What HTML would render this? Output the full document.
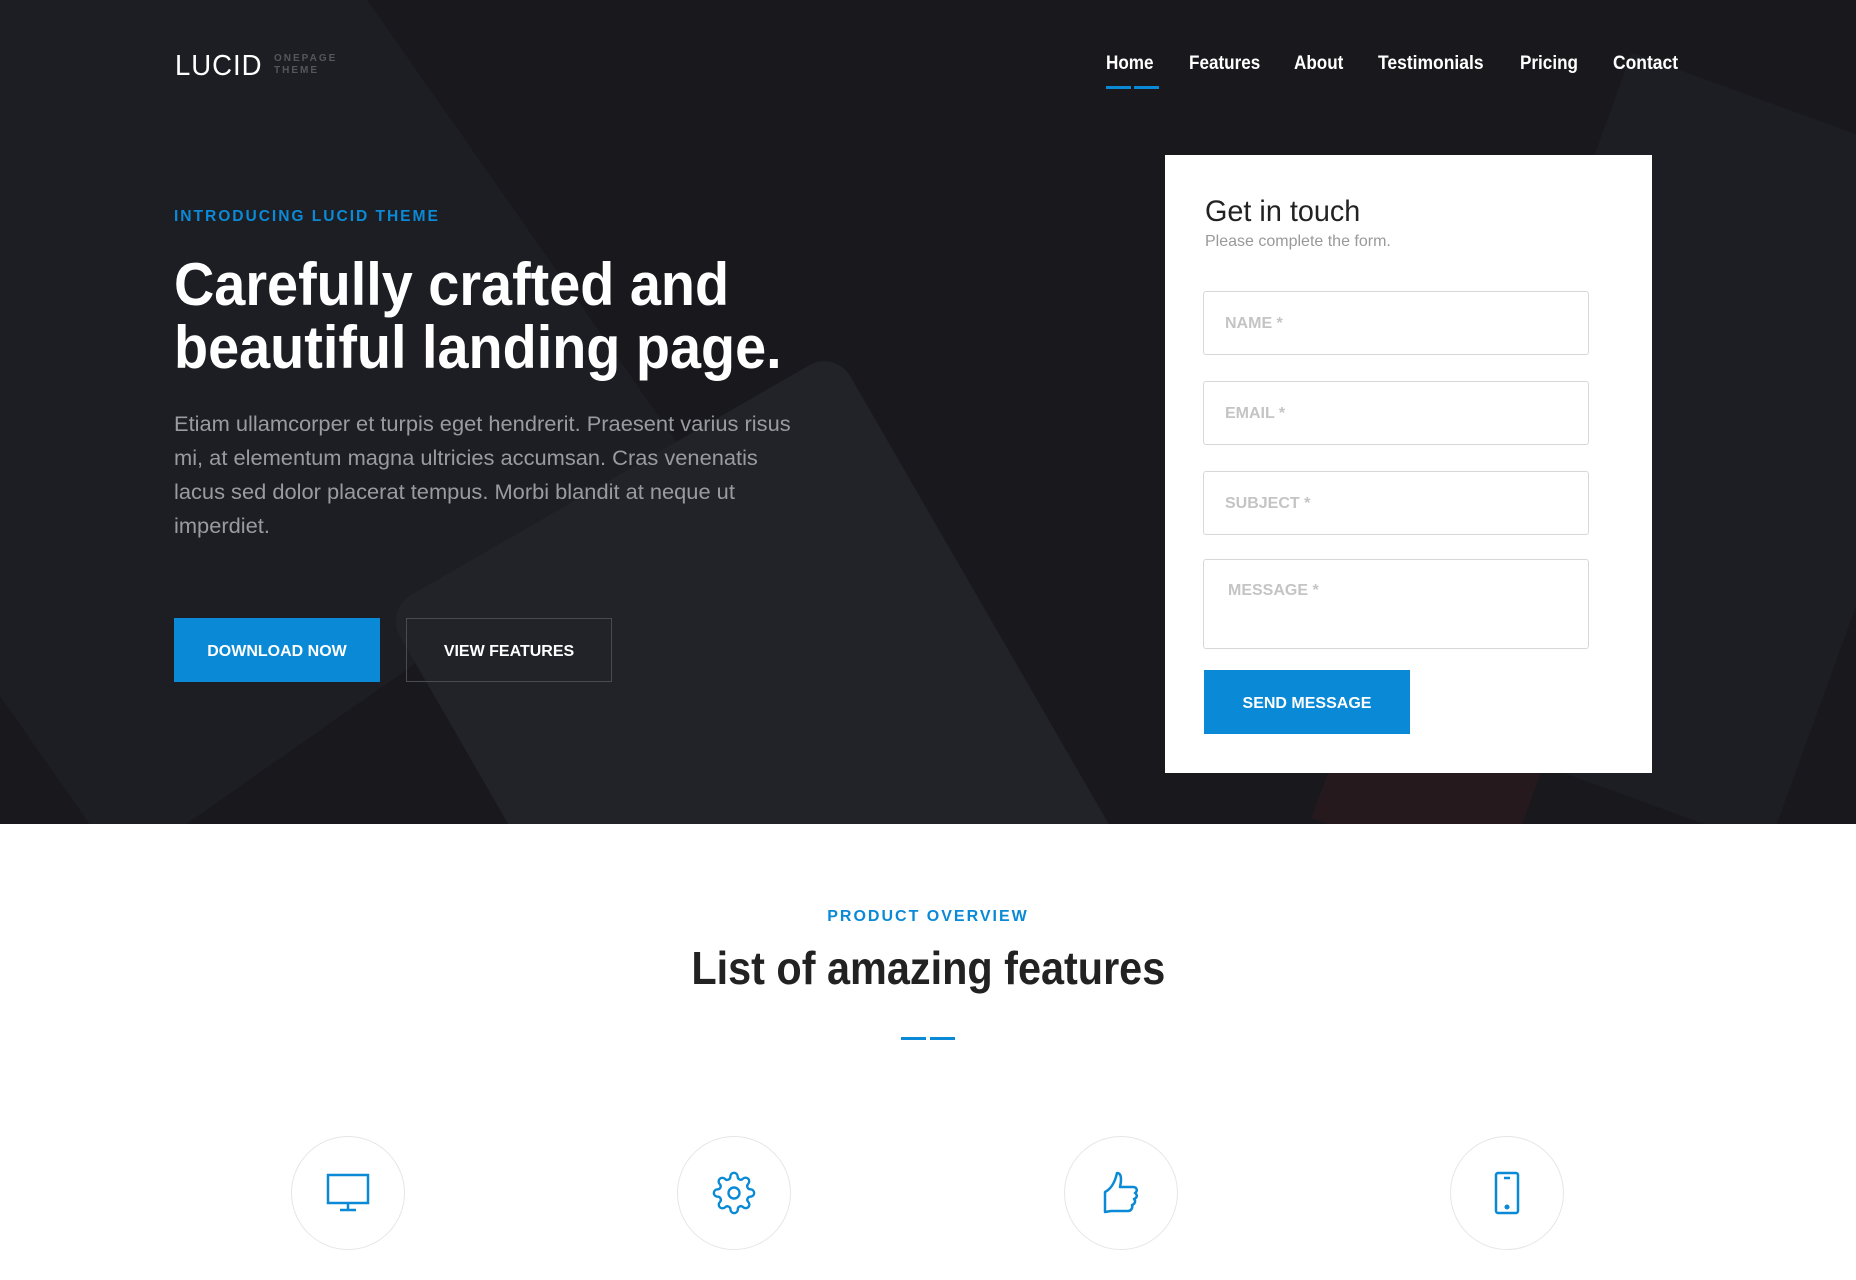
<!DOCTYPE html>
<html><head><meta charset="utf-8"><style>
*{margin:0;padding:0;box-sizing:border-box}
body{width:1856px;height:1280px;overflow:hidden;font-family:"Liberation Sans",sans-serif;background:#fff;position:relative}
.hero{position:absolute;left:0;top:0;width:1856px;height:824px;background:#18181d;overflow:hidden}
.shape{position:absolute}
.a{position:absolute;white-space:nowrap}
.sq{display:inline-block;transform-origin:left center}
nav .a{color:#fff;font-size:19px;font-weight:bold;top:53px}
.inp{position:absolute;left:38px;width:386px;border:1px solid #d8d8d8;border-radius:3px;color:#c4c4c4;font-weight:bold;font-size:16px;padding-left:21px}
.circ{position:absolute;top:1136px;width:114px;height:114px;border:1px solid #e6e6e6;border-radius:50%;display:flex;align-items:center;justify-content:center}
</style></head><body>
<div class="hero">
 <div class="shape" style="left:-200px;top:-150px;width:700px;height:900px;background:#202127;transform:rotate(-35deg);opacity:.7"></div>
 <div class="shape" style="left:500px;top:440px;width:520px;height:600px;background:#222329;transform:rotate(-30deg);border-radius:30px"></div>
 <div class="shape" style="left:1500px;top:100px;width:400px;height:700px;background:#1d1e23;transform:rotate(20deg)"></div>
 <div class="shape" style="left:1350px;top:600px;width:200px;height:260px;background:#25191e;transform:rotate(20deg)"></div>
</div>
<div class="a" style="left:175px;top:50px;color:#fff;font-size:29px;letter-spacing:1px"><span class="sq" style="transform:scaleX(.95)">LUCID</span></div>
<div class="a" style="left:274px;top:53px;color:#55565c;font-size:10px;letter-spacing:2px;line-height:12px;font-weight:bold">ONEPAGE<br>THEME</div>
<nav>
 <div class="a" style="left:1106px"><span class="sq" style="transform:scaleX(.9)">Home</span></div>
 <div class="a" style="left:1189px"><span class="sq" style="transform:scaleX(.9)">Features</span></div>
 <div class="a" style="left:1294px"><span class="sq" style="transform:scaleX(.9)">About</span></div>
 <div class="a" style="left:1378px"><span class="sq" style="transform:scaleX(.92)">Testimonials</span></div>
 <div class="a" style="left:1520px"><span class="sq" style="transform:scaleX(.9)">Pricing</span></div>
 <div class="a" style="left:1613px"><span class="sq" style="transform:scaleX(.92)">Contact</span></div>
</nav>
<div class="a" style="left:1106px;top:86px;width:25px;height:3px;background:#0a8ad6"></div>
<div class="a" style="left:1134px;top:86px;width:25px;height:3px;background:#0a8ad6"></div>

<div class="a" style="left:174px;top:208px;color:#0a8ad6;font-size:16px;font-weight:bold;letter-spacing:2px"><span class="sq" style="transform:scaleX(.975)">INTRODUCING LUCID THEME</span></div>
<div class="a" style="left:174px;top:253px;color:#fff;font-size:60px;font-weight:bold;line-height:63px"><span class="sq" style="transform:scaleX(.93)">Carefully crafted and<br>beautiful landing page.</span></div>
<div class="a" style="left:174px;top:408px;color:#9a9ba1;font-size:21px;line-height:34px"><span class="sq" style="transform:scaleX(1.04)">Etiam ullamcorper et turpis eget hendrerit. Praesent varius risus<br>mi, at elementum magna ultricies accumsan. Cras venenatis<br>lacus sed dolor placerat tempus. Morbi blandit at neque ut<br>imperdiet.</span></div>
<div class="a" style="left:174px;top:618px;width:206px;height:64px;background:#0a8ad6;color:#fff;font-weight:bold;font-size:16px;display:flex;align-items:center;justify-content:center;padding-top:3px">DOWNLOAD NOW</div>
<div class="a" style="left:406px;top:618px;width:206px;height:64px;border:1px solid #4a4b50;color:#fff;font-weight:bold;font-size:16px;display:flex;align-items:center;justify-content:center;padding-top:3px">VIEW FEATURES</div>

<div class="a" style="left:1165px;top:155px;width:487px;height:618px;background:#fff">
 <div class="a" style="left:40px;top:40px;color:#222;font-size:30px"><span class="sq" style="transform:scaleX(.96)">Get in touch</span></div>
 <div class="a" style="left:40px;top:78px;color:#999;font-size:16px">Please complete the form.</div>
 <div class="inp" style="top:136px;height:64px;line-height:64px">NAME *</div>
 <div class="inp" style="top:226px;height:64px;line-height:64px">EMAIL *</div>
 <div class="inp" style="top:316px;height:64px;line-height:64px">SUBJECT *</div>
 <div class="inp" style="top:404px;height:90px;padding-top:22px;padding-left:24px">MESSAGE *</div>
 <div class="a" style="left:39px;top:515px;width:206px;height:64px;background:#0a8ad6;color:#fff;font-weight:bold;font-size:16px;display:flex;align-items:center;justify-content:center;padding-top:3px">SEND MESSAGE</div>
</div>

<div class="a" style="left:0;width:1856px;top:908px;text-align:center;color:#0a8ad6;font-size:16px;font-weight:bold;letter-spacing:2px">PRODUCT OVERVIEW</div>
<div class="a" style="left:0;width:1856px;top:941px;text-align:center;color:#222;font-size:46px;font-weight:bold"><span class="sq" style="transform:scaleX(.9);transform-origin:center">List of amazing features</span></div>
<div class="a" style="left:901px;top:1037px;width:25px;height:3px;background:#0a8ad6"></div>
<div class="a" style="left:930px;top:1037px;width:25px;height:3px;background:#0a8ad6"></div>

<div class="circ" style="left:291px"><svg width="44" height="40" viewBox="0 0 44 40" fill="none" stroke="#0a8ad6" stroke-width="2.5"><rect x="2" y="2" width="40" height="28"/><path d="M22 30v6M14 37h16"/></svg></div>
<div class="circ" style="left:677px"><svg width="44" height="44" viewBox="0 0 24 24" fill="none" stroke="#0a8ad6" stroke-width="1.3"><circle cx="12" cy="12" r="3"/><path d="M19.4 15a1.65 1.65 0 0 0 .33 1.82l.06.06a2 2 0 1 1-2.83 2.83l-.06-.06a1.65 1.65 0 0 0-1.82-.33 1.65 1.65 0 0 0-1 1.51V21a2 2 0 1 1-4 0v-.09A1.65 1.65 0 0 0 9 19.4a1.65 1.65 0 0 0-1.82.33l-.06.06a2 2 0 1 1-2.83-2.83l.06-.06A1.65 1.65 0 0 0 4.68 15a1.65 1.65 0 0 0-1.51-1H3a2 2 0 1 1 0-4h.09A1.65 1.65 0 0 0 4.6 9a1.65 1.65 0 0 0-.33-1.82l-.06-.06a2 2 0 1 1 2.83-2.83l.06.06A1.65 1.65 0 0 0 9 4.68 1.65 1.65 0 0 0 10 3.17V3a2 2 0 1 1 4 0v.09a1.65 1.65 0 0 0 1 1.51 1.65 1.65 0 0 0 1.82-.33l.06-.06a2 2 0 1 1 2.83 2.83l-.06.06A1.65 1.65 0 0 0 19.4 9c.26.6.85 1 1.51 1H21a2 2 0 1 1 0 4h-.09a1.65 1.65 0 0 0-1.51 1z"/></svg></div>
<div class="circ" style="left:1064px"><svg width="44" height="46" viewBox="0 0 44 46" fill="none" stroke="#0a8ad6" stroke-width="2.5" stroke-linejoin="round"><path d="M6 42V22c6-3 10-10 12-19 4 0 5 5 3 14h13c4 0 5 4 2 6 3 2 2 5-1 6 2 2 1 5-2 6 1 3-1 6-4 6H12z"/></svg></div>
<div class="circ" style="left:1450px"><svg width="26" height="44" viewBox="0 0 26 44" fill="none" stroke="#0a8ad6" stroke-width="2.5"><rect x="2" y="2" width="22" height="40" rx="2"/><path d="M10 7h6"/><circle cx="13" cy="36" r="1.3" fill="#0a8ad6"/></svg></div>
</body></html>
